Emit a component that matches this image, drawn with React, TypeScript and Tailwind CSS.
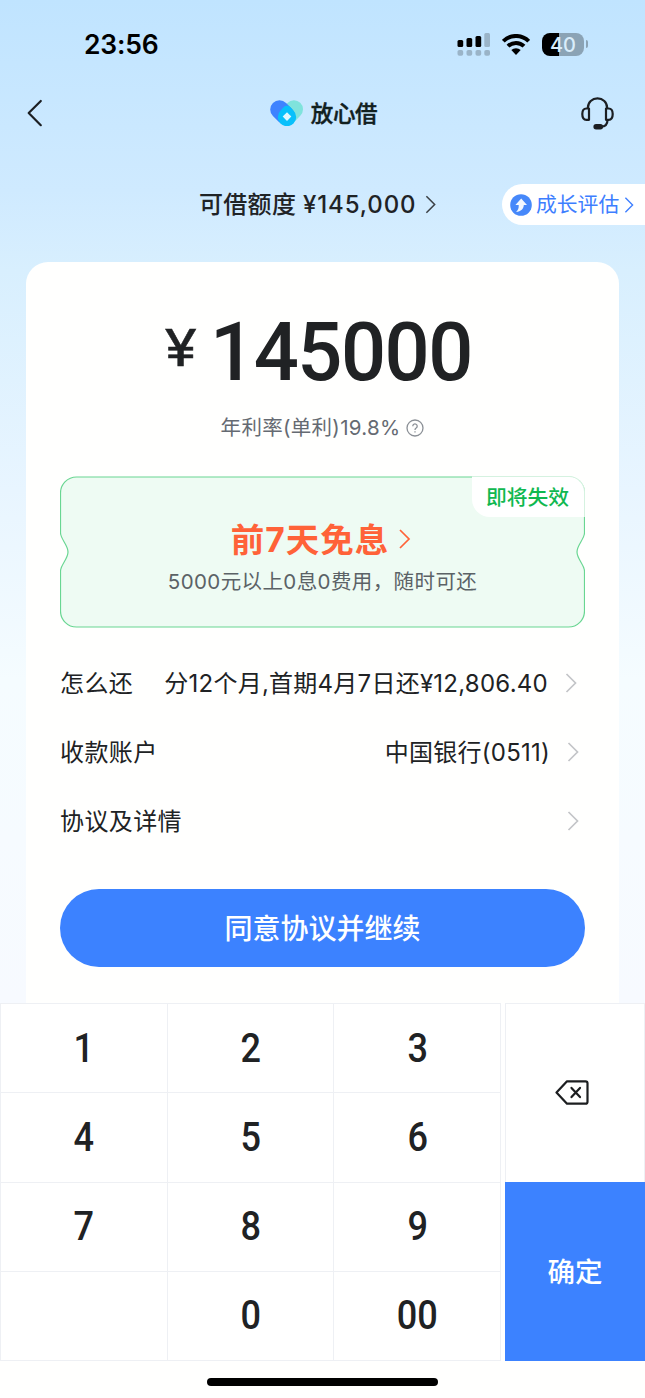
import { clsx } from "clsx";

const rows = [
  { label: "怎么还", value: "分12个月,首期4月7日还¥12,806.40", spacing: "tracking-[0.25px]", arrow: "mr-[8px]" },
  { label: "收款账户", value: "中国银行(0511)", spacing: "tracking-[0.25px]", arrow: "mr-[6px]" },
  { label: "协议及详情", value: "", spacing: "", arrow: "mr-[6px]" },
];

const keys = ["1", "2", "3", "4", "5", "6", "7", "8", "9", "", "0", "00"];

function Chevron({ className }: { className?: string }) {
  return (
    <svg
      viewBox="0 0 12 20"
      fill="none"
      stroke="currentColor"
      strokeWidth="1.7"
      className={clsx("shrink-0", className)}
    >
      <path d="M1.5 1 10.5 10l-9 9" />
    </svg>
  );
}

function StatusBar() {
  return (
    <div className="flex h-[88px] items-center justify-between pl-[84px] pr-[57px]">
      <span className="text-[26.5px] font-semibold leading-none tracking-[-0.2px] text-black">
        23:56
      </span>
      <div className="flex items-center">
        <svg width="33" height="23" viewBox="0 0 33 23" className="mr-[12px]">
          <rect x="0.5" y="7" width="5.7" height="7" rx="1.5" />
          <rect x="9.5" y="5" width="5.7" height="9" rx="1.5" />
          <rect x="18.5" y="3" width="5.7" height="11" rx="1.5" />
          <rect x="27.3" y="0" width="5.7" height="14" rx="1.5" fill="#9ab4c8" />
          {[0.5, 9.5, 18.5, 27.3].map((x) => (
            <rect key={x} x={x} y="17" width="5.7" height="5.8" rx="1.8" fill="#9ab4c8" />
          ))}
        </svg>
        <svg width="28" height="21" viewBox="0 0 28 21" className="mr-[12px]">
          <g fill="none" stroke="#000" strokeWidth="4">
            <path d="M1.3 7.2a18 18 0 0 1 25.4 0" />
            <path d="M6 12.2a11.4 11.4 0 0 1 16 0" />
          </g>
          <path d="M9.3 16.1a6.8 6.8 0 0 1 9.4 0L14 20.9z" />
        </svg>
        <div className="flex h-[23px] w-[42px] items-center justify-center rounded-[8px] bg-[linear-gradient(90deg,#000_40%,#8ba3b5_40%)] pt-px text-[20px] font-medium leading-[22px] text-[#d9edfb]">
          40
        </div>
        <div className="ml-[1.5px] h-[8px] w-[2.5px] rounded-r-full bg-[#8ba3b5]" />
      </div>
    </div>
  );
}

function NavBar() {
  return (
    <div className="flex h-[50px] items-center justify-between pl-[27px] pr-[31px]">
      <svg width="16" height="28" viewBox="0 0 16 28" fill="none" stroke="#1c1f23" strokeWidth="2.2">
        <path d="M13.8 2 1.7 14l12.1 12.2" strokeLinecap="round" strokeLinejoin="round" />
      </svg>
      <div className="ml-[24px] flex items-center">
        <svg width="34" height="26" viewBox="0 0 34 26" fill="none">
          <path d="M24 9.3 19 14.5" stroke="#7fe3dc" strokeWidth="18" strokeLinecap="round" />
          <path d="m9.5 9.5 6 6" stroke="#3f83ff" strokeWidth="18.6" strokeLinecap="round" />
          <path
            d="M13.8 7.1a4.5 4.5 0 0 1 6.4 0l3.2 3.3a9.2 9.2 0 1 1-12.8 0Z"
            fill="#08c0fb"
          />
          <path d="m17 12.300 4.300 4.300-4.300 4.300-4.300-4.300Z" fill="#e2f8ff" />
        </svg>
        <span className="ml-[7px] pt-[2px] text-[22.5px] font-medium leading-none tracking-[-0.3px] text-[#11201f] [-webkit-text-stroke:0.4px]">
          放心借
        </span>
      </div>
      <svg
        width="34"
        height="33"
        viewBox="0 0 34 33"
        fill="none"
        stroke="#1c1f23"
        strokeWidth="2.2"
        strokeLinejoin="round"
        className="-mr-px ml-px"
      >
        <path d="M6.9 11.500v-.8a9.600 9.400 0 0 1 19.200 0v.8" />
        <path d="M8 11.500v11.300H5.400C2.700 22.800 1.300 21 1.300 17s1.400-5.500 4.100-5.500Z" />
        <path d="M25 11.500v11.300h2.600c2.700 0 4.100-1.800 4.100-5.800s-1.400-5.500-4.100-5.500Z" />
        <path d="M26.500 23c0 4.300-2 6.600-6.500 6.700" />
        <rect x="13.500" y="28.200" width="7.500" height="3.200" rx="1.6" fill="#1c1f23" />
      </svg>
    </div>
  );
}

function LimitRow() {
  return (
    <div className="mt-[46px] flex h-[41px] items-center">
      <div className="ml-[199px] flex w-[303px] items-center font-medium text-[#1f2326]">
        <span className="whitespace-nowrap pt-px text-[24px] leading-none tracking-[0.3px]">
          可借额度 <span className="tracking-[0.9px]">¥145,000</span>
        </span>
        <Chevron className="ml-[8px] h-[19px] w-[11px] text-[#3c4145]" />
      </div>
      <div className="flex h-full flex-1 items-center rounded-l-full bg-white pl-[8px] text-[#3d7eff]">
        <svg width="22" height="22" viewBox="0 0 22 22" className="shrink-0">
          <circle cx="11" cy="11" r="10.8" fill="#4688fa" />
          <path d="M11.2 4.5 17 11h-3.2c0 3.7-2.8 6.5-7.7 7 2-1.7 2.8-3.9 2.6-7H5.4Z" fill="#f3f8ff" />
        </svg>
        <span className="ml-[4px] whitespace-nowrap pt-[2px] text-[20.8px] leading-none">成长评估</span>
        <Chevron className="ml-[5px] h-[16px] w-[10px]" />
      </div>
    </div>
  );
}

function Coupon() {
  return (
    <div className="relative mt-[36px] h-[152px] w-[525px]">
      <svg className="absolute inset-0" width="525" height="152" viewBox="0 0 525 152">
        <path
          d="M16.5 1H508.5a16 16 0 0 1 16 16V57c0 6-7.5 12-7.5 19s7.5 13 7.5 19V135a16 16 0 0 1-16 16H16.5a16 16 0 0 1-16-16V95c0-6 7.5-12 7.5-19S.5 63 .5 57V17a16 16 0 0 1 16-16Z"
          fill="#eefbf3"
          stroke="#69d692"
          strokeWidth="1.2"
        />
      </svg>
      <div className="absolute right-0 top-0 flex h-[41px] w-[113px] items-center justify-center rounded-bl-[18px] rounded-tr-[16px] border-r border-t border-[#d5f2e0] bg-white pr-px pt-[2px] text-[20.8px] font-medium leading-none text-[#10b850]">
        即将失效
      </div>
      <div className="relative flex h-full flex-col items-center pt-[43px]">
        <div className="flex h-[40px] items-center text-[#ff6238]">
          <span className="pt-[3px] text-[33.5px] font-bold leading-none tracking-[1px]">前7天免息</span>
          <Chevron className="ml-[9px] mr-[3px] h-[20px] w-[13px]" />
        </div>
        <p className="mt-[10px] whitespace-nowrap text-[20.5px] leading-[26px] tracking-[0.4px] text-[#5b6266]">
          5000元以上0息0费用，随时可还
        </p>
      </div>
    </div>
  );
}

function Keypad() {
  return (
    <div className="flex h-[358px] bg-white">
      <div className="grid h-full w-[501px] grid-cols-3 grid-rows-4 border-l border-t border-[#eef0f4]">
        {keys.map((key, i) => (
          <button
            key={i}
            className="flex items-center justify-center border-b border-r border-[#eef0f4] font-[Roboto] text-[41px] font-medium leading-none text-[#202224]"
          >
            <span className="scale-x-[0.88]">{key}</span>
          </button>
        ))}
      </div>
      <div className="ml-[4px] flex flex-1 flex-col">
        <button className="flex h-[179px] items-center justify-center border border-b-0 border-[#eef0f4]">
          <svg
            width="34"
            height="25"
            viewBox="0 0 34 25"
            fill="none"
            stroke="#1c1e20"
            strokeWidth="2.2"
            strokeLinejoin="round"
            className="-mt-px -ml-[6px]"
          >
            <path d="M12 1.3h18.5a2 2 0 0 1 2 2v18.4a2 2 0 0 1-2 2H12L1.5 12.5Z" />
            <path d="m16.5 7.9 8.5 9.200m0-9.200-8.500 9.200" strokeLinecap="round" />
          </svg>
        </button>
        <button className="flex-1 bg-[#3c82ff] pt-[2px] text-[27.5px] font-medium leading-none text-white">
          确定
        </button>
      </div>
    </div>
  );
}

export default function App() {
  return (
    <div className="flex h-[1398px] w-[645px] flex-col overflow-hidden bg-[linear-gradient(180deg,#c0e4ff_0px,#cfeaff_190px,#d8effe_270px,#e8f5ff_490px,#f5fcff_680px,#f7faff_1000px)] font-[Inter,'Noto_Sans_CJK_SC',sans-serif]">
      <StatusBar />
      <NavBar />
      <LimitRow />
      <div className="mx-[26px] mt-[37px] flex h-[741px] flex-col items-center rounded-t-[22px] bg-[#fffffe]">
        <div className="mt-[50px] flex h-[80px] items-start pr-[3px] font-[Roboto] font-medium leading-none text-[#202224]">
          <span className="mt-[11px] origin-left scale-x-[1.15] text-[52px] font-normal [-webkit-text-stroke:0.5px]">
            ¥
          </span>
          <span className="ml-[17px] origin-left scale-x-[0.98] text-[81px] tracking-[-1.5px]">145000</span>
        </div>
        <div className="mt-[22px] flex h-[26px] items-center text-[#656a72]">
          <span className="pt-[2px] text-[20.5px] leading-none tracking-[0.3px]">年利率(单利)19.8%</span>
          <svg width="18" height="18" viewBox="0 0 18 18" fill="none" stroke="#8b9096" className="ml-[6px] mt-[2px]">
            <circle cx="9" cy="9" r="8" strokeWidth="1.3" />
            <path d="M6.8 7.2a2.2 2.2 0 1 1 3.4 1.8c-.8.5-1.2.9-1.2 1.9M9 12.2v1.3" strokeWidth="1.3" />
          </svg>
        </div>
        <Coupon />
        <div className="mt-[20px] w-[525px]">
          {rows.map((row) => (
            <div
              key={row.label}
              className="flex h-[69px] items-center whitespace-nowrap text-[24px] leading-none text-[#202224]"
            >
              <span className="pt-[2px] tracking-[0.4px]">{row.label}</span>
              <span className={clsx("ml-auto pt-[2px]", row.spacing)}>{row.value}</span>
              <Chevron className={clsx("ml-[17px] h-[20px] w-[12px] text-[#c3c5c8]", row.arrow)} />
            </div>
          ))}
        </div>
        <button className="mt-[34px] h-[78px] w-[525px] rounded-full bg-[#3c82ff] pt-[2px] text-[28px] font-medium leading-none text-white">
          同意协议并继续
        </button>
      </div>
      <Keypad />
      <div className="flex flex-1 justify-center bg-[#fffffe] pt-[17px]">
        <div className="h-[8px] w-[231px] rounded-full bg-black" />
      </div>
    </div>
  );
}
